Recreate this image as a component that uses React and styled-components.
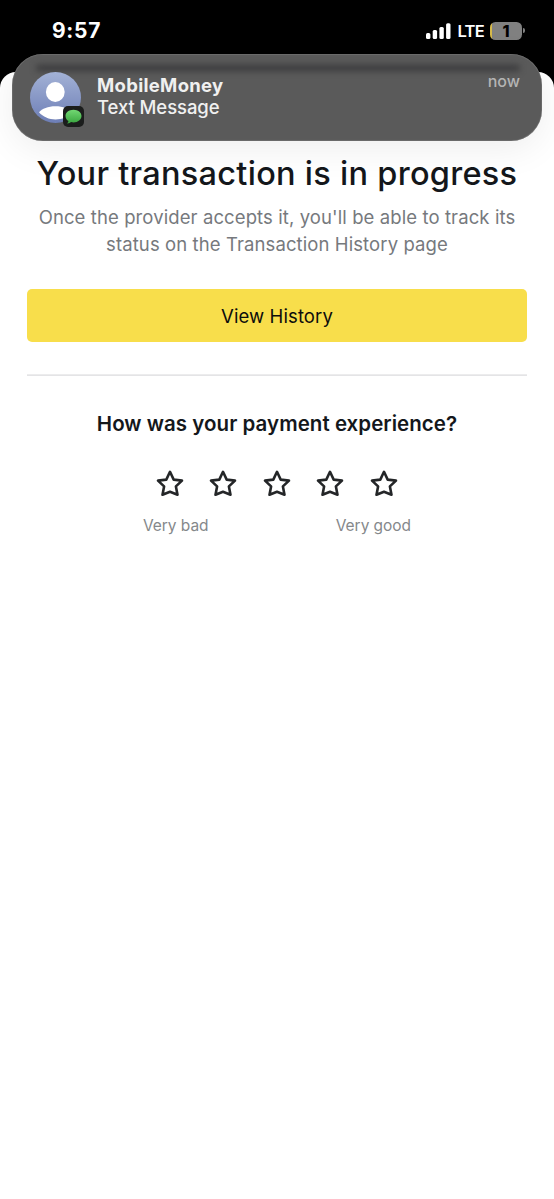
import React from "react";
import styled, { createGlobalStyle } from "styled-components";

const GlobalStyle = createGlobalStyle`
  *, *::before, *::after { box-sizing: border-box; }
  body {
    margin: 0;
    background: #fff;
    font-family: Inter, "Liberation Sans", sans-serif;
    -webkit-font-smoothing: antialiased;
  }
`;

const Screen = styled.div`
  position: relative;
  min-height: 1199px;
  display: flex;
  flex-direction: column;
  background: #000;
  overflow: hidden;
`;

const StatusBar = styled.header`
  flex: none;
  height: 72px;
  padding: 18px 32px 0 52px;
  display: flex;
  align-items: flex-start;
  justify-content: space-between;
  color: #fff;
`;

const Clock = styled.time`
  font-size: 21px;
  line-height: 25px;
  font-weight: 700;
  letter-spacing: 0.7px;
`;

const StatusIcons = styled.div`
  height: 25px;
  display: flex;
  align-items: center;
`;

const Network = styled.span`
  margin: 0 6px 0 6px;
  font-size: 16.5px;
  line-height: 20px;
  font-weight: 600;
  letter-spacing: -0.7px;
`;

const Battery = styled.div`
  position: relative;
  width: 32px;
  height: 18px;
  border-radius: 5.5px;
  background: linear-gradient(90deg, #d5b94a 0 1.6px, #808080 1.6px);
  color: #000;
  font-size: 16px;
  line-height: 18px;
  font-weight: 800;
  text-align: center;

  &::after {
    content: "";
    position: absolute;
    right: -3px;
    top: 6px;
    width: 2px;
    height: 5px;
    border-radius: 0 2px 2px 0;
    background: #808080;
  }
`;

const Banner = styled.section`
  position: absolute;
  z-index: 1;
  top: 54px;
  left: 12px;
  right: 12px;
  height: 87px;
  padding: 18px 22px 0 18px;
  display: flex;
  align-items: flex-start;
  border-radius: 31px;
  background: #5a5a5a;
  box-shadow: inset 0 0 1px 0.5px rgba(150, 150, 150, 0.55), 0 8px 36px rgba(0, 0, 0, 0.07);

  &::before {
    content: "";
    position: absolute;
    left: 24px;
    right: 22px;
    top: 11px;
    height: 6px;
    border-radius: 3px;
    background: #39393b;
    filter: blur(3px);
  }
`;

const Avatar = styled.div`
  position: relative;
  flex: none;
  width: 51px;
  height: 51px;

  svg { display: block; }
`;

const AppBadge = styled.span`
  position: absolute;
  left: 33px;
  top: 34px;
`;

const BannerText = styled.div`
  position: relative;
  flex: 1;
  margin-left: 16px;
  padding-top: 2px;
  color: #f0f0f0;
`;

const Sender = styled.div`
  font-size: 18.5px;
  line-height: 22px;
  font-weight: 700;
  letter-spacing: 0.3px;
`;

const Preview = styled.div`
  font-size: 18.5px;
  line-height: 23px;
  font-weight: 500;
  letter-spacing: -0.08px;
`;

const When = styled.span`
  position: relative;
  top: -1px;
  font-size: 16px;
  line-height: 20px;
  font-weight: 500;
  color: #b4b4b4;
`;

const Sheet = styled.main`
  flex: 1;
  padding: 78px 27px 0;
  border-radius: 16px 16px 0 0;
  background: #fff;
  text-align: center;
`;

const Title = styled.h1`
  margin: 0 -20px;
  font-size: 32.5px;
  line-height: 48px;
  font-weight: 500;
  letter-spacing: 0.28px;
  color: #14171b;
  white-space: nowrap;
`;

const Description = styled.p`
  margin: 6px -20px 0;
  font-size: 18.5px;
  line-height: 27px;
  letter-spacing: 0.1px;
  color: #76797d;
  white-space: nowrap;
`;

const HistoryButton = styled.button`
  display: block;
  width: 100%;
  height: 53px;
  margin-top: 31px;
  padding: 1px 0 0;
  border: 0;
  border-radius: 5px;
  background: #f8de4b;
  color: #0c0c0c;
  font: 400 18.5px/53px Inter, sans-serif;
  letter-spacing: 0.1px;
`;

const Divider = styled.hr`
  margin: 32px 0 0;
  border: 0;
  height: 2px;
  background: linear-gradient(#ececed 50%, #e4e4e6 50%);
`;

const Question = styled.h2`
  margin: 34px 0 0;
  font-size: 20.5px;
  line-height: 28px;
  font-weight: 600;
  letter-spacing: 0.04px;
  color: #14171b;
`;

const Stars = styled.div`
  margin-top: 29px;
  display: flex;
  justify-content: center;
  gap: 20.5px;
`;

const StarButton = styled.button`
  width: 33px;
  height: 33px;
  padding: 0;
  border: 0;
  background: none;

  svg { display: block; }
`;

const ScaleLabels = styled.div`
  width: 268px;
  margin: 16px auto 0;
  display: flex;
  justify-content: space-between;
  font-size: 15.5px;
  line-height: 20px;
  letter-spacing: -0.05px;
  color: #85888b;
`;

const SignalIcon = () => (
  <svg width="25" height="16" viewBox="0 0 25 16" fill="#fff">
    <rect x="0" y="10" width="4.4" height="6" rx="1.5" />
    <rect x="6.7" y="7" width="4.4" height="9" rx="1.5" />
    <rect x="13.4" y="4" width="4.4" height="12" rx="1.5" />
    <rect x="20.1" y="0.3" width="4.4" height="15.7" rx="1.5" />
  </svg>
);

const PersonIcon = () => (
  <svg width="51" height="51" viewBox="0 0 51 51">
    <defs>
      <linearGradient id="sky" x1="0" y1="0" x2="0" y2="1">
        <stop offset="0" stopColor="#a3b2d6" />
        <stop offset="1" stopColor="#6d7eb6" />
      </linearGradient>
    </defs>
    <circle cx="25.5" cy="25.5" r="25.5" fill="url(#sky)" />
    <ellipse cx="25.3" cy="20" rx="9.4" ry="10" fill="#fff" />
    <path d="M9 40.3C12 36.5 18 34.2 25.5 34.2S39 36.5 42 40.3C38 45 32 47.5 25.5 47.5S13 45 9 40.3Z" fill="#fff" />
  </svg>
);

const MessagesIcon = () => (
  <svg width="21" height="21" viewBox="0 0 21 21">
    <defs>
      <linearGradient id="bubble" x1="0" y1="0" x2="0" y2="1">
        <stop offset="0" stopColor="#72d873" />
        <stop offset="1" stopColor="#39a53f" />
      </linearGradient>
    </defs>
    <rect width="21" height="21" rx="5" fill="#1b1d1c" />
    <path d="M10.5 3.7C5.9 3.7 2.5 6.5 2.5 10C2.5 12.2 3.7 14 5.5 15.1C5.4 16.1 4.9 16.9 4.1 17.4C5.6 17.5 7.1 17 8.1 16.1C8.9 16.3 9.7 16.4 10.5 16.4C15 16.4 18.5 13.6 18.5 10C18.5 6.5 15 3.7 10.5 3.7Z" fill="url(#bubble)" />
  </svg>
);

const StarIcon = () => (
  <svg width="33" height="33" viewBox="0 0 33 33" fill="none" stroke="#242628" strokeWidth="2.6" strokeLinejoin="round">
    <path d="M16 4.8L19.7 12.6L28 13.6L21.9 19.4L23.5 27.7L16 24.8L8.500 27.700L10.100 19.400L4 13.600L12.300 12.600Z" />
  </svg>
);

export default function App() {
  return (
    <>
      <GlobalStyle />
      <Screen>
        <StatusBar>
          <Clock>9:57</Clock>
          <StatusIcons>
            <SignalIcon />
            <Network>LTE</Network>
            <Battery>1</Battery>
          </StatusIcons>
        </StatusBar>
        <Banner>
          <Avatar>
            <PersonIcon />
            <AppBadge><MessagesIcon /></AppBadge>
          </Avatar>
          <BannerText>
            <Sender>MobileMoney</Sender>
            <Preview>Text Message</Preview>
          </BannerText>
          <When>now</When>
        </Banner>
        <Sheet>
          <Title>Your transaction is in progress</Title>
          <Description>
            Once the provider accepts it, you'll be able to track its
            <br />
            status on the Transaction History page
          </Description>
          <HistoryButton>View History</HistoryButton>
          <Divider />
          <Question>How was your payment experience?</Question>
          <Stars>
            {[1, 2, 3, 4, 5].map((value) => (
              <StarButton key={value} aria-label={`${value} of 5`}>
                <StarIcon />
              </StarButton>
            ))}
          </Stars>
          <ScaleLabels>
            <span>Very bad</span>
            <span>Very good</span>
          </ScaleLabels>
        </Sheet>
      </Screen>
    </>
  );
}
